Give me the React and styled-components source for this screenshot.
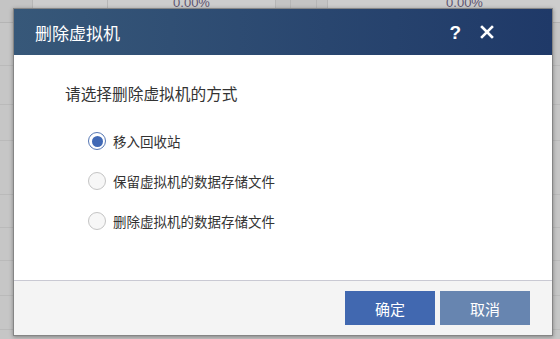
import styled, { createGlobalStyle } from 'styled-components'

const GlobalStyle = createGlobalStyle`
    html, body {
        margin: 0;
        padding: 0;
        width: 560px;
        height: 339px;
        overflow: hidden;
        font-family: "Noto Sans CJK SC", "Noto Sans", sans-serif;
    }
`

const options = [
    { label: '移入回收站', checked: true },
    { label: '保留虚拟机的数据存储文件', checked: false },
    { label: '删除虚拟机的数据存储文件', checked: false },
]

const rows = [43, 39, 36, 54, 33, 33, 35, 34]

function App() {
    return (
        <Page>
            <GlobalStyle />
            <Backdrop>
                <TopRow>
                    <Cell w={33} />
                    <Cell w={75} light />
                    <Cell w={168} light>0.00%</Cell>
                    <Cell w={15} />
                    <Cell w={26} />
                    <Cell w={11} />
                    <Cell w={274} light>0.00%</Cell>
                </TopRow>
                {rows.map((h, i) => <BgRow key={i} h={h} />)}
            </Backdrop>
            <Dialog>
                <Header>
                    <Title>删除虚拟机</Title>
                    <HeaderTools>
                        <Help>?</Help>
                        <svg width="14" height="14" viewBox="0 0 14 14">
                            <path d="M2 2 L12 12 M12 2 L2 12" stroke="#fff" strokeWidth="2.6" strokeLinecap="square" />
                        </svg>
                    </HeaderTools>
                </Header>
                <Body>
                    <Prompt>请选择删除虚拟机的方式</Prompt>
                    <OptionList>
                        {options.map(o =>
                            <Option key={o.label}>
                                <Radio checked={o.checked} />
                                <span>{o.label}</span>
                            </Option>)}
                    </OptionList>
                </Body>
                <Footer>
                    <Button>确定</Button>
                    <Button secondary>取消</Button>
                </Footer>
            </Dialog>
        </Page>
    )
}

export default App

const Page = styled.div`
    position: relative;
    width: 560px;
    height: 339px;
    overflow: hidden;
    background: #c6c6c6;
`

const Backdrop = styled.div`
    display: flex;
    flex-direction: column;
`

const TopRow = styled.div`
    display: flex;
    height: 22px;
    border-bottom: 1px solid #b4b4b4;
`

const Cell = styled.div`
    width: ${p => p.w}px;
    flex-shrink: 0;
    box-sizing: border-box;
    border-right: 1px solid #b6b6b6;
    background: ${p => p.light ? '#cdcdcd' : '#c4c4c4'};
    color: #5d5470;
    font-family: "Liberation Sans", sans-serif;
    font-size: 13px;
    line-height: 1;
    text-align: center;
    margin-top: -5px;
    padding-top: 1px;
`

const BgRow = styled.div`
    height: ${p => p.h}px;
    border-bottom: 1px solid #bababa;
    box-sizing: border-box;
`

const Dialog = styled.div`
    position: absolute;
    left: 13px;
    top: 8px;
    width: 540px;
    height: 328px;
    display: flex;
    flex-direction: column;
    background: #fff;
    border: 1px solid #858585;
    box-sizing: border-box;
    box-shadow: 0 1px 4px rgba(0, 0, 0, .35);
`

const Header = styled.div`
    height: 46px;
    flex-shrink: 0;
    display: flex;
    align-items: center;
    justify-content: space-between;
    padding: 0 58px 0 21px;
    background: linear-gradient(to right, #375879, #1f3968);
    color: #fff;
`

const Title = styled.h1`
    margin: 0;
    font-size: 17px;
    font-weight: 400;
`

const HeaderTools = styled.div`
    display: flex;
    align-items: center;
    gap: 19px;
`

const Help = styled.span`
    font-family: "Liberation Sans", sans-serif;
    font-size: 19px;
    font-weight: 700;
    line-height: 1;
`

const Body = styled.div`
    flex: 1;
    padding: 28px 0 0 51px;
`

const Prompt = styled.p`
    margin: 0;
    font-size: 15.7px;
    line-height: 22px;
    color: #333;
`

const OptionList = styled.div`
    display: flex;
    flex-direction: column;
    gap: 22px;
    padding: 27px 0 0 23px;
`

const Option = styled.label`
    display: flex;
    align-items: center;
    gap: 7px;
    height: 18px;
    font-size: 13.5px;
    color: #333;
`

const Radio = styled.span`
    width: 18px;
    height: 18px;
    box-sizing: border-box;
    border-radius: 50%;
    border: 1px solid ${p => p.checked ? '#5677b4' : '#c4c4c4'};
    background: ${p => p.checked ? '#fff' : '#f7f7f7'};
    display: flex;
    align-items: center;
    justify-content: center;

    &::after {
        content: '';
        display: ${p => p.checked ? 'block' : 'none'};
        width: 11px;
        height: 11px;
        border-radius: 50%;
        background: #4169b5;
    }
`

const Footer = styled.div`
    height: 54px;
    flex-shrink: 0;
    display: flex;
    justify-content: flex-end;
    align-items: center;
    gap: 5px;
    padding: 0 22px 0 0;
    background: #f4f4f4;
    border-top: 1px solid #c9c9d3;
`

const Button = styled.button`
    width: 90px;
    height: 34px;
    border: none;
    background: ${p => p.secondary ? '#6785b0' : '#4168b0'};
    color: #fff;
    font-family: "Noto Sans CJK SC", sans-serif;
    font-size: 15px;
    cursor: pointer;
`
